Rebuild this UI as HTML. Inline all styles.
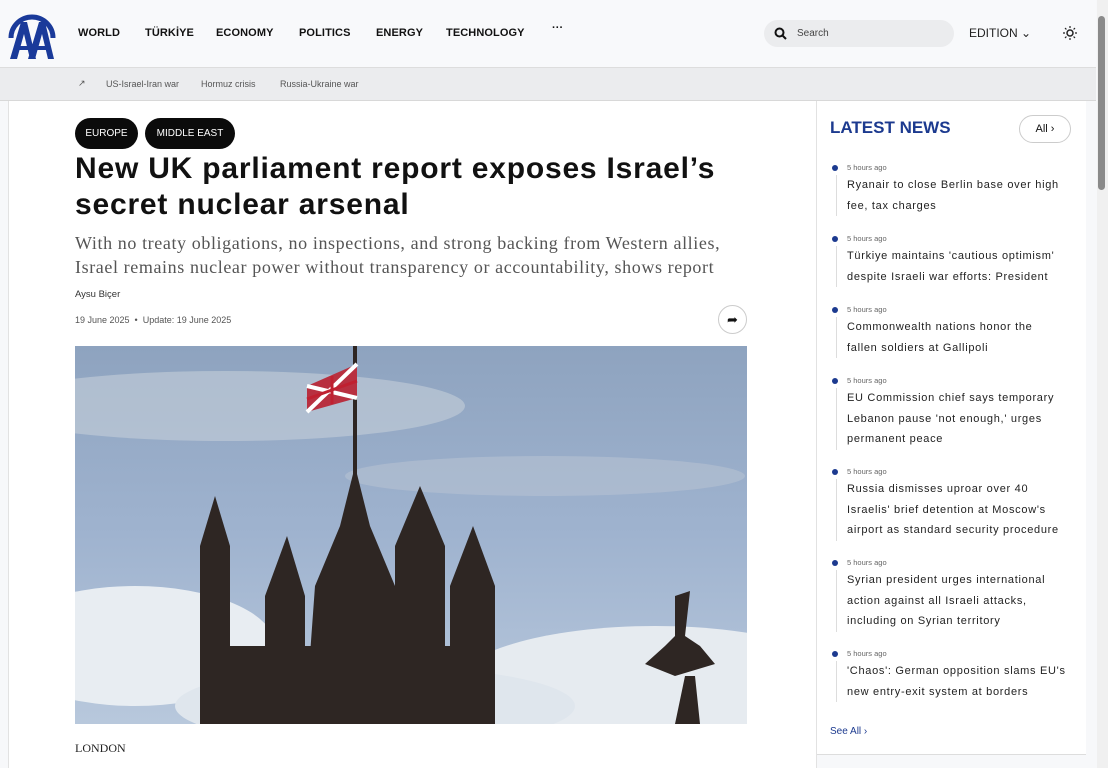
<!DOCTYPE html>
<html><head><meta charset="utf-8"><style>
*{margin:0;padding:0;box-sizing:border-box}
body{width:1108px;height:768px;overflow:hidden;background:#f7f8fa;font-family:"Liberation Sans",sans-serif;position:relative;color:#111}
.hdr{position:absolute;left:0;top:0;width:1096px;height:68px;background:#f8f9fb;border-bottom:1px solid #ddd}
.nav{position:absolute;top:27px;font-size:11px;font-weight:bold;letter-spacing:.1px;color:#111}
.trend{position:absolute;left:0;top:68px;width:1096px;height:33px;background:#ebecee;border-bottom:1px solid #d8d8d8;font-size:9px;color:#555}
.main{position:absolute;left:8px;top:101px;width:809px;height:667px;background:#fff;border-left:1px solid #e2e2e2;border-right:1px solid #e2e2e2}
.side{position:absolute;left:817px;top:101px;width:269px;height:654px;background:#fff;border-bottom:1px solid #ddd}
.pill{position:absolute;top:118px;height:31px;border-radius:16px;background:#0b0b0b;color:#fff;font-size:10px;line-height:31px;text-align:center}
h1{position:absolute;left:75px;top:151px;font-size:30px;line-height:36px;font-weight:bold;letter-spacing:.8px;white-space:nowrap}
.sub{position:absolute;left:75px;top:231px;font-family:"Liberation Serif",serif;font-size:18px;line-height:24px;color:#555;white-space:nowrap;letter-spacing:.6px}
.item{position:absolute;left:830px;width:250px}
.item .t{font-size:7.5px;color:#666;padding-left:17px}
.item .h{font-size:11px;line-height:20.5px;color:#222;margin-top:3px;border-left:1px solid #ddd;margin-left:6px;padding-left:10px;white-space:nowrap;letter-spacing:.7px}
.dot{position:absolute;left:2px;top:2px;width:6px;height:6px;border-radius:50%;background:#1c3a8f}
</style></head><body>
<div class="hdr">
<svg style="position:absolute;left:6px;top:8px" width="52" height="52" viewBox="0 0 52 52"><path d="M5 30 A21 21 0 0 1 47 30" fill="none" stroke="#1a3a9a" stroke-width="5"/><path d="M4 51 L15 14 L21 14 L30 51 L24 51 L18 26 L11 51Z M22 51 L33 14 L39 14 L48 51 L42 51 L36 26 L29 51Z" fill="#1a3a9a"/><rect x="9" y="38" width="13" height="4" fill="#1a3a9a"/><rect x="27" y="38" width="13" height="4" fill="#1a3a9a"/></svg>
<div class="nav" style="left:78px">WORLD</div>
<div class="nav" style="left:145px">TÜRKİYE</div>
<div class="nav" style="left:216px">ECONOMY</div>
<div class="nav" style="left:299px">POLITICS</div>
<div class="nav" style="left:376px">ENERGY</div>
<div class="nav" style="left:446px">TECHNOLOGY</div>
<div class="nav" style="left:552px;top:22px">···</div>
<div style="position:absolute;left:764px;top:20px;width:190px;height:27px;border-radius:14px;background:#ebecee;font-size:10px;color:#444;line-height:27px;padding-left:33px">Search
<svg style="position:absolute;left:10px;top:7px" width="13" height="13" viewBox="0 0 13 13"><circle cx="5.5" cy="5.5" r="4" fill="none" stroke="#111" stroke-width="2"/><path d="M8.5 8.5 L12 12" stroke="#111" stroke-width="2"/></svg></div>
<div style="position:absolute;left:969px;top:26px;font-size:12px;color:#222">EDITION ⌄</div>
<svg style="position:absolute;left:1063px;top:26px" width="14" height="14" viewBox="0 0 14 14"><circle cx="7" cy="7" r="3" fill="none" stroke="#222" stroke-width="1.5"/><path d="M7 0v2M7 12v2M0 7h2M12 7h2M2 2l1.4 1.4M10.6 10.6L12 12M2 12l1.4-1.4M10.6 3.4L12 2" stroke="#222" stroke-width="1.2"/></svg>
</div>
<div class="trend"><span style="position:absolute;left:78px;top:10px">↗</span><span style="position:absolute;left:106px;top:11px">US-Israel-Iran war</span><span style="position:absolute;left:201px;top:11px">Hormuz crisis</span><span style="position:absolute;left:280px;top:11px">Russia-Ukraine war</span></div>
<div style="position:absolute;left:1097px;top:0;width:11px;height:768px;background:#f0f0f0"></div>
<div style="position:absolute;left:1098px;top:16px;width:7px;height:174px;border-radius:4px;background:#8a8a8a"></div>
<div class="main"></div>
<div class="pill" style="left:75px;width:63px">EUROPE</div>
<div class="pill" style="left:145px;width:90px">MIDDLE EAST</div>
<h1>New UK parliament report exposes Israel’s<br>secret nuclear arsenal</h1>
<div class="sub">With no treaty obligations, no inspections, and strong backing from Western allies,<br>Israel remains nuclear power without transparency or accountability, shows report</div>
<div style="position:absolute;left:75px;top:289px;font-size:9.5px;color:#333">Aysu Biçer</div>
<div style="position:absolute;left:75px;top:315px;font-size:9px;color:#555">19 June 2025 &nbsp;•&nbsp; Update: 19 June 2025</div>
<div style="position:absolute;left:718px;top:305px;width:29px;height:29px;border-radius:50%;border:1px solid #ccc;background:#fff;font-size:13px;text-align:center;line-height:27px">➦</div>
<svg style="position:absolute;left:75px;top:346px" width="672" height="378" viewBox="0 0 672 378">
<defs><linearGradient id="s" x1="0" y1="0" x2="0" y2="1"><stop offset="0" stop-color="#8ea3bf"/><stop offset=".5" stop-color="#9fb3cf"/><stop offset="1" stop-color="#b8c8dc"/></linearGradient></defs>
<rect width="672" height="378" fill="url(#s)"/>
<ellipse cx="150" cy="60" rx="240" ry="35" fill="#c4ced9" opacity=".6"/>
<ellipse cx="470" cy="130" rx="200" ry="20" fill="#b5c2d2" opacity=".6"/>
<ellipse cx="60" cy="300" rx="140" ry="60" fill="#e8edf2"/>
<ellipse cx="580" cy="340" rx="200" ry="60" fill="#e6ebf0"/>
<ellipse cx="300" cy="360" rx="200" ry="40" fill="#dfe6ed"/>
<g fill="#2e2623">
<rect x="278" y="0" width="4" height="200"/>
<path d="M125 378 L125 200 L140 150 L155 200 L155 378Z M190 378 L190 250 L212 190 L230 250 L230 378Z M230 378 L240 240 L265 180 L280 120 L295 180 L320 240 L330 378Z M320 378 L320 200 L345 140 L370 200 L370 378Z M375 378 L375 240 L398 180 L420 240 L420 378Z M150 378 L150 300 L380 300 L380 378Z"/>
<path d="M600 250 L615 245 L610 290 L625 300 L640 318 L600 330 L570 318 L590 300 L600 290Z M610 330 L600 378 L625 378 L620 330Z"/>
</g>
<path d="M232 40 L282 18 L282 52 L232 66Z" fill="#b83040"/><path d="M232 40 L282 52 M232 66 L282 18" stroke="#fff" stroke-width="4"/><path d="M257 30 L257 58 M232 53 L282 35" stroke="#c02030" stroke-width="3"/>
</svg>
<div style="position:absolute;left:75px;top:741px;font-family:'Liberation Serif',serif;font-size:12px;color:#222">LONDON</div>
<div class="side"></div>
<div style="position:absolute;left:830px;top:118px;font-size:17px;font-weight:bold;color:#1c3a8f">LATEST NEWS</div>
<div style="position:absolute;left:1019px;top:115px;width:52px;height:28px;border:1px solid #ccc;border-radius:14px;font-size:11px;line-height:26px;text-align:center;background:#fff">All ›</div>
<div class="item" style="top:163px"><div class="dot"></div><div class="t">5 hours ago</div><div class="h">Ryanair to close Berlin base over high<br>fee, tax charges</div></div>
<div class="item" style="top:234px"><div class="dot"></div><div class="t">5 hours ago</div><div class="h">Türkiye maintains 'cautious optimism'<br>despite Israeli war efforts: President</div></div>
<div class="item" style="top:305px"><div class="dot"></div><div class="t">5 hours ago</div><div class="h">Commonwealth nations honor the<br>fallen soldiers at Gallipoli</div></div>
<div class="item" style="top:376px"><div class="dot"></div><div class="t">5 hours ago</div><div class="h">EU Commission chief says temporary<br>Lebanon pause 'not enough,' urges<br>permanent peace</div></div>
<div class="item" style="top:467px"><div class="dot"></div><div class="t">5 hours ago</div><div class="h">Russia dismisses uproar over 40<br>Israelis' brief detention at Moscow's<br>airport as standard security procedure</div></div>
<div class="item" style="top:558px"><div class="dot"></div><div class="t">5 hours ago</div><div class="h">Syrian president urges international<br>action against all Israeli attacks,<br>including on Syrian territory</div></div>
<div class="item" style="top:649px"><div class="dot"></div><div class="t">5 hours ago</div><div class="h">'Chaos': German opposition slams EU's<br>new entry-exit system at borders</div></div>
<div style="position:absolute;left:830px;top:726px;font-size:10px;color:#1c3a8f">See All ›</div>
</body></html>
